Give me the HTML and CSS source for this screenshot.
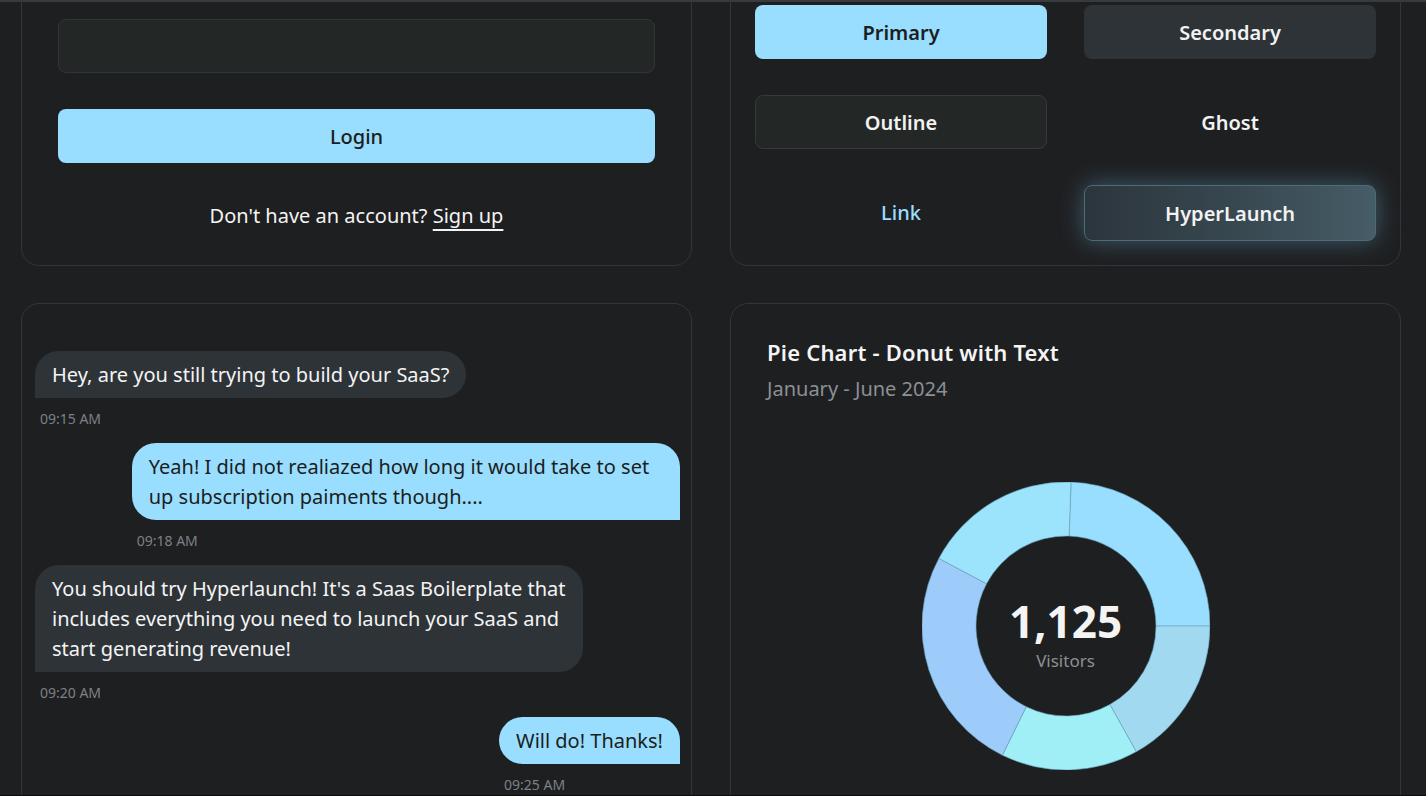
FILE: index.html
```html
<!DOCTYPE html>
<html lang="en">
<head>
<meta charset="utf-8">
<title>UI Showcase</title>
<link rel="stylesheet" href="styles.css">
</head>
<body>
<div class="viewport">
  <div class="grid top-row">
    <section class="card login-card">
      <div class="input"></div>
      <button class="btn btn-primary btn-block">Login</button>
      <p class="signup">Don't have an account? <a class="signup-link">Sign up</a></p>
    </section>
    <section class="card buttons-card">
      <div class="btn-grid">
        <button class="btn btn-primary">Primary</button>
        <button class="btn btn-secondary">Secondary</button>
        <button class="btn btn-outline">Outline</button>
        <button class="btn btn-ghost">Ghost</button>
        <button class="btn btn-link">Link</button>
        <button class="btn btn-hyper">HyperLaunch</button>
      </div>
    </section>
  </div>
  <div class="grid bottom-row">
    <section class="card chat-card">
      <div class="chat">
        <div class="msg received">
          <div class="bubble">Hey, are you still trying to build your SaaS?</div>
          <div class="time">09:15 AM</div>
        </div>
        <div class="msg sent">
          <div class="bubble">Yeah! I did not realiazed how long it would take to set up subscription paiments though....</div>
          <div class="time">09:18 AM</div>
        </div>
        <div class="msg received">
          <div class="bubble">You should try Hyperlaunch! It's a Saas Boilerplate that includes everything you need to launch your SaaS and start generating revenue!</div>
          <div class="time">09:20 AM</div>
        </div>
        <div class="msg sent">
          <div class="bubble">Will do! Thanks!</div>
          <div class="time">09:25 AM</div>
        </div>
      </div>
    </section>
    <section class="card chart-card">
      <h2 class="chart-title">Pie Chart - Donut with Text</h2>
      <p class="chart-sub">January - June 2024</p>
      <div class="donut-wrap">
        <svg class="donut" width="288" height="288" viewBox="0 0 288 288">
          <g stroke="#6aa3bd" stroke-width="0.6">
            <path fill="#99ddff" d="M149.03 0.09 A144 144 0 0 1 288 144 L234 144 A90 90 0 0 0 147.14 54.05 Z"/>
            <path fill="#a1d9f1" d="M288 144 A144 144 0 0 1 214.26 269.70 L187.91 222.56 A90 90 0 0 0 234 144 Z"/>
            <path fill="#a0eff6" d="M214.26 269.70 A144 144 0 0 1 80.42 273.21 L104.26 224.76 A90 90 0 0 0 187.91 222.56 Z"/>
            <path fill="#9dcbfa" d="M80.42 273.21 A144 144 0 0 1 16.86 76.39 L64.54 101.74 A90 90 0 0 0 104.26 224.76 Z"/>
            <path fill="#9be4fb" d="M16.86 76.39 A144 144 0 0 1 149.03 0.09 L147.14 54.05 A90 90 0 0 0 64.54 101.74 Z"/>
          </g>
        </svg>
        <div class="donut-center">
          <div class="donut-value">1,125</div>
          <div class="donut-label">Visitors</div>
        </div>
      </div>
    </section>
  </div>
</div>
</body>
</html>
```

FILE: styles.css
```css
* { box-sizing: border-box; }

html, body {
  margin: 0;
  padding: 0;
  background: #1e1f21;
}

body {
  font-family: "Noto Sans", "Open Sans", sans-serif;
  color: #f2f2f2;
}

.viewport {
  height: 796px;
  overflow: hidden;
  border-top: 2px solid #363b40;
  border-bottom: 1px solid #0c0c0c;
  background: #1e1f21;
}

.grid {
  display: grid;
  grid-template-columns: 671px 671px;
  column-gap: 38px;
  padding-left: 21px;
}

.top-row {
  margin-top: -60px;
}

.bottom-row {
  margin-top: 37px;
}

.card {
  border: 1px solid #30373b;
  border-radius: 18px;
  background: #1e1f21;
}

/* login card */
.login-card {
  padding: 76px 36px 34px;
  display: flex;
  flex-direction: column;
}

.input {
  height: 54px;
  background: #232827;
  border: 1px solid #2f3637;
  border-radius: 8px;
}

.btn {
  font-family: inherit;
  font-size: 20px;
  font-weight: 600;
  height: 54px;
  padding-top: 2px;
  border-radius: 8px;
  border: 1px solid transparent;
  background: transparent;
  color: #f2f2f2;
  cursor: pointer;
}

.btn-block {
  width: 100%;
  margin-top: 36px;
}

.btn-primary {
  background: #99ddff;
  color: #1b1e20;
}

.login-card .btn-primary {
  font-weight: 500;
}

.signup {
  margin: 38px 0 0;
  text-align: center;
  font-size: 20px;
  line-height: 30px;
  color: #f4f4f4;
}

.signup-link {
  text-decoration: underline;
  text-decoration-thickness: 1.5px;
  text-underline-offset: 6px;
  color: #f4f4f4;
}

/* buttons card */
.buttons-card {
  padding: 62px 24px 24px;
}

.btn-grid {
  display: grid;
  grid-template-columns: 1fr 1fr;
  column-gap: 37px;
  row-gap: 36px;
}

.btn-secondary {
  background: #2e3338;
}

.btn-outline {
  background: #232827;
  border-color: #333a3c;
}

.btn-link {
  color: #99ddff;
  font-weight: 500;
}

.btn-hyper {
  height: 56px;
  background: linear-gradient(90deg, #2c353c 0%, #374750 50%, #465c66 100%);
  border-color: #4d6b79;
  box-shadow: 0 0 24px rgba(110, 180, 215, 0.42);
}

/* chat */
.chat-card {
  padding: 47px 11px 0 13px;
  height: 520px;
}

.chat {
  display: flex;
  flex-direction: column;
  gap: 14px;
}

.msg {
  display: flex;
  flex-direction: column;
  max-width: 85%;
}

.msg.received { align-self: flex-start; }
.msg.sent { align-self: flex-end; }

.bubble {
  font-size: 20px;
  line-height: 30px;
  padding: 9px 17px 8px;
}

.received .bubble {
  background: #2e3338;
  color: #f4f4f4;
  border-radius: 24px 24px 24px 0;
}

.sent .bubble {
  background: #99ddff;
  color: #1b1e20;
  border-radius: 24px 24px 0 24px;
}

.time {
  margin-top: 11px;
  padding-left: 5px;
  font-size: 14px;
  line-height: 20px;
  color: #7c8185;
}

/* chart */
.chart-card {
  padding: 34px 36px 0;
  height: 520px;
}

.chart-title {
  margin: 0;
  font-size: 22px;
  line-height: 28px;
  font-weight: 600;
  letter-spacing: 0.2px;
  color: #f4f4f4;
}

.chart-sub {
  margin: 9px 0 0;
  font-size: 20px;
  line-height: 28px;
  color: #8b9094;
}

.donut-wrap {
  position: relative;
  width: 288px;
  height: 288px;
  margin: 79px auto 0;
}

.donut {
  display: block;
}

.donut-center {
  position: absolute;
  inset: 0;
  display: flex;
  flex-direction: column;
  align-items: center;
  justify-content: center;
  padding-top: 20px;
}

.donut-value {
  font-size: 44px;
  line-height: 44px;
  font-weight: 700;
  color: #f4f4f4;
}

.donut-label {
  font-size: 17px;
  line-height: 24px;
  color: #8b9094;
  margin-top: 6px;
}
```
